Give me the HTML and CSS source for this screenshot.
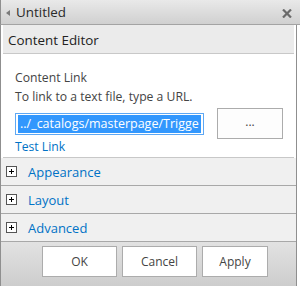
FILE: index.html
```html
<!DOCTYPE html>
<html>
<head>
<meta charset="utf-8">
<link rel="stylesheet" href="styles.css">
</head>
<body>
<div class="dialog">
  <div class="titlebar">
    <span class="back-arrow"></span>
    <span class="title">Untitled</span>
    <svg class="close" width="10" height="9" viewBox="0 0 10 9"><path d="M1 0.5 L9 8.5 M9 0.5 L1 8.5" stroke="#6b6b6b" stroke-width="2.2"/></svg>
  </div>
  <div class="body">
    <div class="section-head">Content Editor</div>
    <div class="content">
      <div class="label">Content Link</div>
      <div class="hint">To link to a text file, type a URL.</div>
      <div class="link-row">
        <div class="input"><span class="sel">../_catalogs/masterpage/Trigge</span></div>
        <div class="btn-dots">...</div>
      </div>
      <div class="test-link">Test Link</div>
    </div>
    <div class="rows">
      <div class="row"><span class="plus"></span><span class="row-label">Appearance</span></div>
      <div class="row"><span class="plus"></span><span class="row-label">Layout</span></div>
      <div class="row"><span class="plus"></span><span class="row-label">Advanced</span></div>
    </div>
    <div class="footer">
      <div class="btn btn-ok">OK</div>
      <div class="btn btn-cancel">Cancel</div>
      <div class="btn btn-apply">Apply</div>
    </div>
  </div>
</div>
</body>
</html>
```
FILE: styles.css
```css
* { box-sizing: border-box; }
html, body { margin: 0; padding: 0; background: #fff; }
body {
  font-family: "Open Sans", "Noto Sans", sans-serif;
  font-size: 12.2px;
  color: #444;
  width: 300px;
  height: 286px;
  overflow: hidden;
}
.dialog { width: 300px; height: 286px; }
.titlebar {
  height: 25px;
  width: 300px;
  border-left: 1px solid #8f8f8f;
  border-bottom: 1px solid #a3a3a3;
  background: linear-gradient(#e9e9e9, #d0d0d0);
  display: flex;
  align-items: center;
  padding-left: 5px;
  padding-right: 8px;
}
.back-arrow {
  width: 0; height: 0;
  border-top: 3px solid transparent;
  border-bottom: 3px solid transparent;
  border-right: 4px solid #7a7a7a;
  margin-right: 6px;
  margin-top: 1px;
}
.title { font-size: 13.4px; color: #2a2a2a; flex: 1; }
.close { display: block; margin-top: 2px; }
.body {
  width: 297px;
  height: 261px;
  border-left: 1px solid #8f8f8f;
  border-right: 1px solid #8f8f8f;
  display: flex;
  flex-direction: column;
}
.section-head {
  margin: 0 2px 0 2px;
  height: 29px;
  background: #ebebeb;
  border-bottom: 1px solid #c8c8c8;
  font-size: 13.4px;
  color: #222;
  padding-left: 5px;
  line-height: 30px;
}
.content {
  padding: 14px 0 0 12px;
  margin: 0 2px;
  height: 104px;
  border-bottom: 1px solid #c8c8c8;
}
.label, .hint { line-height: 19px; }
.link-row { display: flex; align-items: center; margin-top: 2px; height: 31px; }
.input {
  width: 189px;
  height: 22px;
  border: 1px solid #5ea8f4;
  padding: 1px 2px;
  overflow: hidden;
  white-space: nowrap;
  background: #fff;
}
.sel {
  display: block;
  background: #3297fd;
  color: #fff;
  height: 18px;
  line-height: 18px;
  font-size: 12.5px;
  padding-left: 2px;
  overflow: hidden;
}
.btn-dots {
  margin-left: 13px;
  width: 66px;
  height: 31px;
  border: 1px solid #acacac;
  background: #fdfdfd;
  text-align: center;
  line-height: 26px;
  color: #444;
  font-size: 12px;
}
.test-link { color: #0072c6; line-height: 19px; margin-top: -2px; }
.rows { background: #f0f0f0; }
.row {
  height: 28px;
  border-bottom: 1px solid #a8a8a8;
  display: flex;
  align-items: center;
  padding-left: 5px;
}
.plus {
  width: 11px; height: 11px;
  border: 1px solid #555;
  background: #fff;
  position: relative;
  margin-right: 11px;
}
.plus::before, .plus::after {
  content: "";
  position: absolute;
  background: #000;
}
.plus::before { left: 2px; top: 4px; width: 5px; height: 1px; }
.plus::after { left: 4px; top: 2px; width: 1px; height: 5px; }
.row-label { color: #0072c6; font-size: 13px; }
.footer {
  flex: 1;
  background: linear-gradient(#e2e2e2, #cdcdcd);
  display: flex;
  align-items: flex-start;
  padding-top: 4px;
  padding-left: 41px;
}
.btn {
  height: 31px;
  border: 1px solid #acacac;
  background: #fff;
  text-align: center;
  line-height: 29px;
  color: #444;
  font-size: 12px;
}
.btn-ok { width: 75px; }
.btn-cancel { width: 75px; margin-left: 5px; }
.btn-apply { width: 66px; margin-left: 5px; }
```
